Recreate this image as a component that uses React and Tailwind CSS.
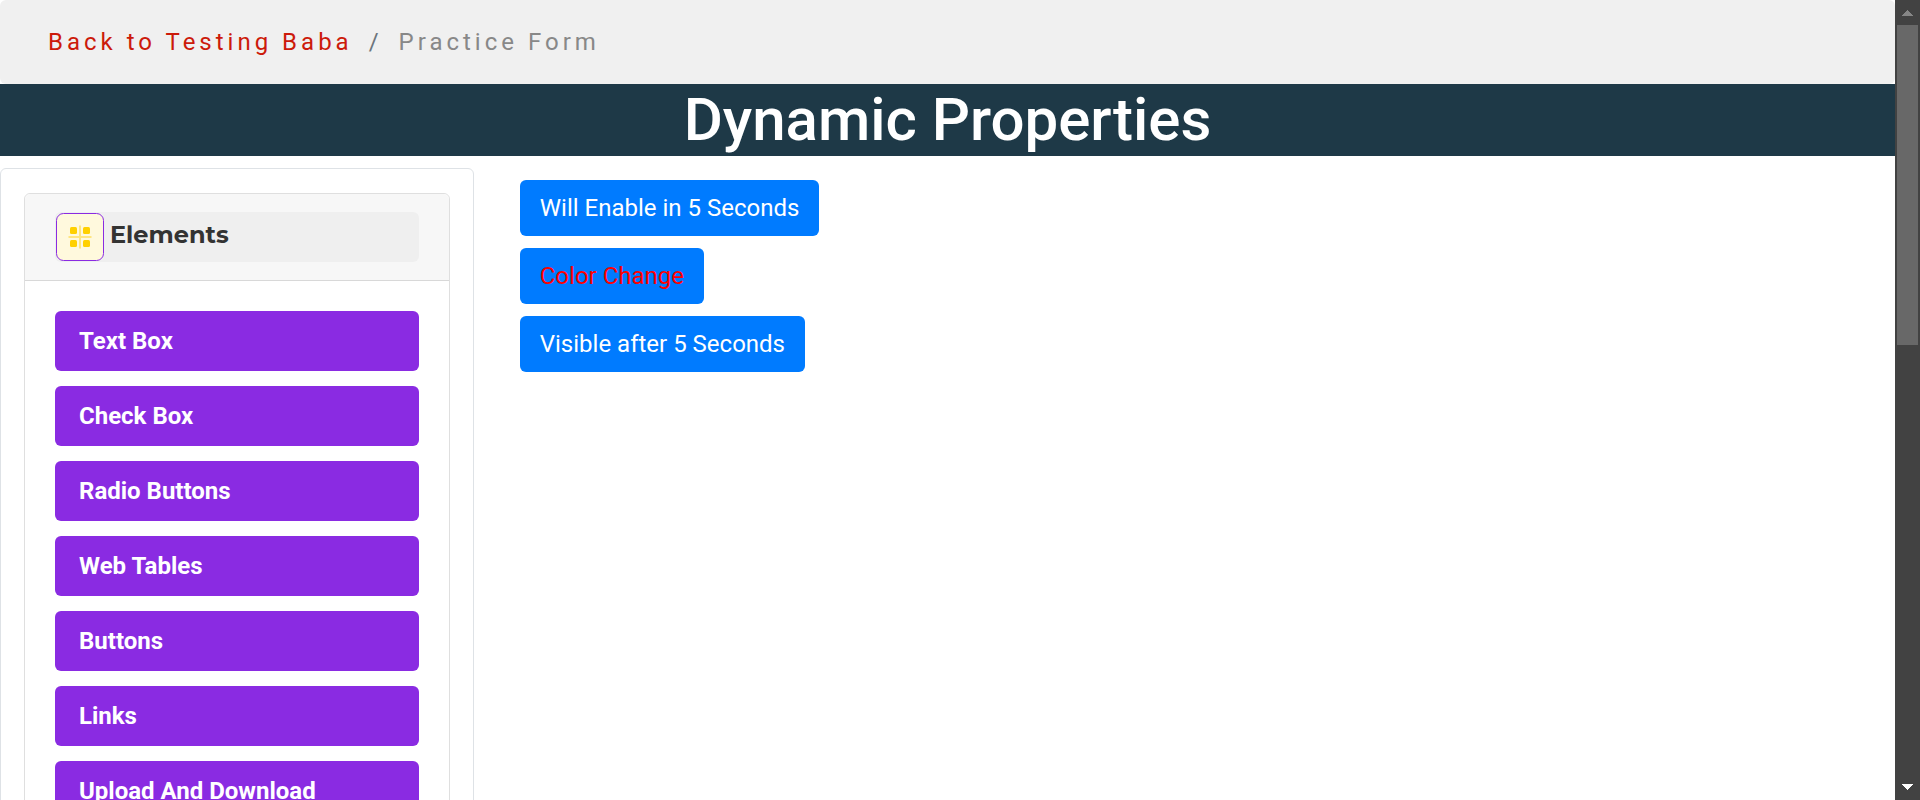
const navItems = [
  'Text Box',
  'Check Box',
  'Radio Buttons',
  'Web Tables',
  'Buttons',
  'Links',
  'Upload And Download',
];

const actions = [
  { label: 'Will Enable in 5 Seconds', color: 'text-white' },
  { label: 'Color Change', color: 'text-[#ff0000]' },
  { label: 'Visible after 5 Seconds', color: 'text-white' },
];

function ElementsIcon() {
  return (
    <svg viewBox="0 0 48 48" className="size-12 shrink-0" aria-hidden="true">
      <rect x="0.5" y="0.5" width="47" height="47" rx="7" fill="#fff9dd" stroke="#8a2be2" />
      <path d="M24 12.5v23M12.5 24h23" stroke="#ffe680" strokeWidth="2" />
      <g fill="#ffd000">
        <rect x="14" y="14" width="7" height="7" rx="1.5" />
        <rect x="27" y="14" width="7" height="7" rx="1.5" />
        <rect x="14" y="27" width="7" height="7" rx="1.5" />
        <rect x="27" y="27" width="7" height="7" rx="1.5" />
      </g>
    </svg>
  );
}

function Breadcrumb() {
  return (
    <nav aria-label="Breadcrumb" className="rounded-md bg-[#f0f0f0] px-12 py-6">
      <ol className="flex gap-4 leading-9 tracking-[4px]">
        <li>
          <a href="#" className="text-[#cc1a0a]">Back to Testing Baba</a>
        </li>
        <li className="text-[#6c757d]" aria-hidden="true">/</li>
        <li className="text-[#888888]" aria-current="page">Practice Form</li>
      </ol>
    </nav>
  );
}

function Sidebar() {
  return (
    <aside className="w-1/4 shrink-0 rounded-md border border-[#dee2e6] px-[23px] py-6">
      <section className="rounded-md border border-[#dfdfdf]">
        <header className="rounded-t-md border-b border-[#d8d8d8] bg-[#f7f7f7] px-[30px] py-[18px]">
          <button
            type="button"
            className="flex w-full items-center gap-1.5 rounded-md bg-[#efefef] p-px text-left font-['Montserrat',Inter,sans-serif] font-bold text-[#333333]"
          >
            <ElementsIcon />
            <span className="pb-1 leading-9">Elements</span>
          </button>
        </header>
        <ul className="flex flex-col gap-[15px] p-[30px]">
          {navItems.map((item) => (
            <li key={item}>
              <a href="#" className="block rounded-md bg-[#8a2be2] px-6 py-3 font-bold leading-9 text-white">
                {item}
              </a>
            </li>
          ))}
        </ul>
      </section>
    </aside>
  );
}

function ScrollBar() {
  return (
    <div className="flex w-[25px] shrink-0 flex-col items-center bg-[#424242]" aria-hidden="true">
      <svg viewBox="0 0 25 25" className="size-[25px] shrink-0" shapeRendering="crispEdges">
        <path d="M7 16L12.5 10L18 16z" fill="#868686" />
      </svg>
      <div className="h-2/5 w-[21px] bg-[#686868]" />
      <svg viewBox="0 0 25 25" className="mt-auto size-[25px] shrink-0" shapeRendering="crispEdges">
        <path d="M7 9L12.5 15L18 9z" fill="#ffffff" />
      </svg>
    </div>
  );
}

export default function App() {
  return (
    <div className="flex h-screen overflow-hidden bg-white font-['Roboto',sans-serif] text-2xl">
      <div className="min-w-0 flex-1 overflow-hidden">
        <Breadcrumb />
        <h1 className="bg-[#1e3947] text-center text-[60px] font-medium leading-[72px] text-white">
          Dynamic Properties
        </h1>
        <div className="flex pt-3">
          <Sidebar />
          <main className="flex flex-1 flex-col items-start gap-3 px-[46px] py-3">
            {actions.map(({ label, color }) => (
              <button
                key={label}
                type="button"
                className={`rounded-md bg-[#007bff] px-5 py-[10px] leading-9 ${color}`}
              >
                {label}
              </button>
            ))}
          </main>
        </div>
      </div>
      <ScrollBar />
    </div>
  );
}
